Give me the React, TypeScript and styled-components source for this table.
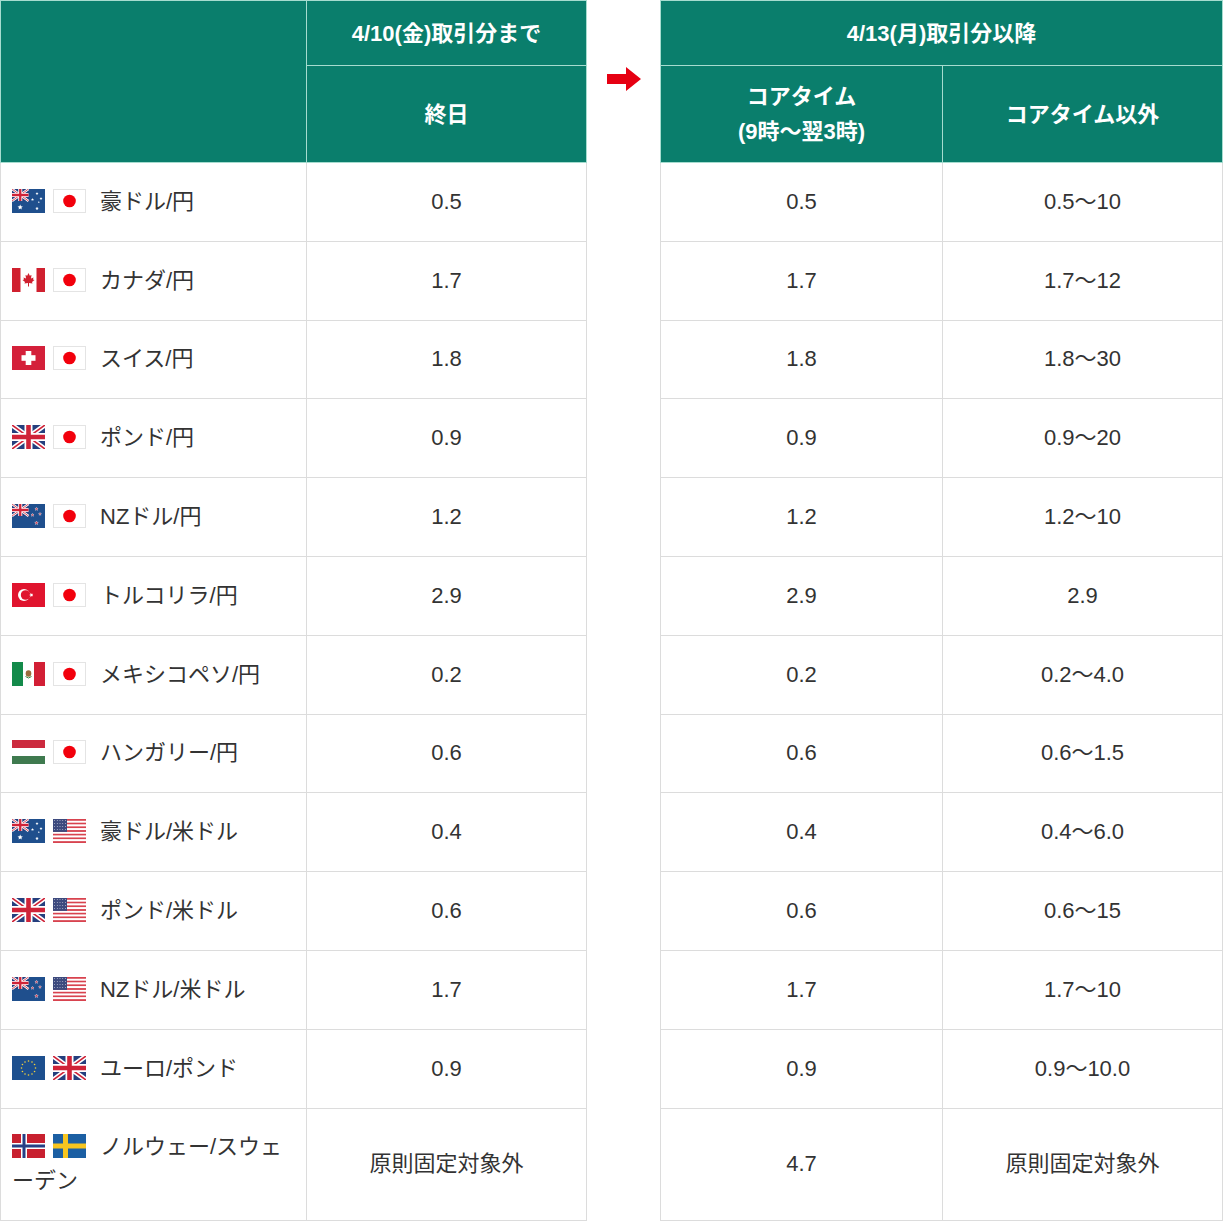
import React from 'react';
import styled, { createGlobalStyle } from 'styled-components';

const GlobalStyle = createGlobalStyle`
  body {
    margin: 0;
    background: #fff;
    font-family: "Liberation Sans", "Noto Sans CJK JP", sans-serif;
  }
`;

const Page = styled.div`
  display: flex;
  align-items: flex-start;
  width: 1223px;
`;

const Table = styled.table<{ $width: number }>`
  width: ${p => p.$width}px;
  border-collapse: collapse;
  table-layout: fixed;
`;

const HeadRow = styled.tr<{ $height: number }>`
  height: ${p => p.$height}px;
`;

const HeadCell = styled.th`
  background: #0a7e6c;
  color: #fff;
  font-size: 22px;
  font-weight: 700;
  line-height: 35px;
  text-align: center;
  border: 1px solid #a6dccf;
  padding: 0 8px;
`;

const BodyRow = styled.tr<{ $height: number }>`
  height: ${p => p.$height}px;
`;

const Cell = styled.td`
  border: 1px solid #dcdcdc;
  color: #333;
  font-size: 22px;
  line-height: 34px;
  text-align: center;
  padding: 0 12px;
`;

const PairCell = styled(Cell)`
  text-align: left;
  padding: 0 12px 0 11px;
  line-break: loose;
`;

const ArrowColumn = styled.div`
  width: 73px;
  flex: none;
  display: flex;
  justify-content: center;
  padding-top: 67px;
`;

const FlagSvg = styled.svg<{ $gap: number }>`
  width: 33px;
  height: 24px;
  vertical-align: -4px;
  margin-right: ${p => p.$gap}px;
`;

const starPoints = (cx: number, cy: number, r: number) => {
  const pts: string[] = [];
  for (let i = 0; i < 10; i++) {
    const rad = i % 2 === 0 ? r : r * 0.45;
    const a = -Math.PI / 2 + (i * Math.PI) / 5;
    pts.push(`${(cx + rad * Math.cos(a)).toFixed(2)},${(cy + rad * Math.sin(a)).toFixed(2)}`);
  }
  return pts.join(' ');
};

const Union = () => (
  <g>
    <rect width="33" height="24" fill="#253f7e" />
    <path d="M0,0L33,24M33,0L0,24" stroke="#fff" strokeWidth="4.8" />
    <path d="M0,0L33,24M33,0L0,24" stroke="#cf2338" strokeWidth="1.6" />
    <path d="M16.5,0V24M0,12H33" stroke="#fff" strokeWidth="8" />
    <path d="M16.5,0V24M0,12H33" stroke="#cf2338" strokeWidth="4.6" />
  </g>
);

const flags: Record<string, React.ReactNode> = {
  jp: (
    <g>
      <rect x="0.5" y="0.5" width="32" height="23" fill="#fff" stroke="#e4e4e4" />
      <circle cx="16.5" cy="12" r="6.3" fill="#f2000c" />
    </g>
  ),
  au: (
    <g>
      <rect width="33" height="24" fill="#1f4f8d" />
      <g transform="scale(0.5)">
        <Union />
      </g>
      <polygon points={starPoints(8.2, 18.3, 2.8)} fill="#fff" />
      <polygon points={starPoints(25, 4.5, 1.6)} fill="#fff" />
      <polygon points={starPoints(20.5, 10.5, 1.6)} fill="#fff" />
      <polygon points={starPoints(29, 9.5, 1.6)} fill="#fff" />
      <polygon points={starPoints(25, 19.5, 1.8)} fill="#fff" />
      <polygon points={starPoints(26.8, 13.2, 1)} fill="#fff" />
    </g>
  ),
  nz: (
    <g>
      <rect width="33" height="24" fill="#1f4f8d" />
      <g transform="scale(0.5)">
        <Union />
      </g>
      <polygon points={starPoints(24.5, 5, 1.7)} fill="#d8283c" stroke="#fff" strokeWidth="0.4" />
      <polygon points={starPoints(20.5, 11, 1.6)} fill="#d8283c" stroke="#fff" strokeWidth="0.4" />
      <polygon points={starPoints(28, 10, 1.5)} fill="#d8283c" stroke="#fff" strokeWidth="0.4" />
      <polygon points={starPoints(24.5, 19, 1.9)} fill="#d8283c" stroke="#fff" strokeWidth="0.4" />
    </g>
  ),
  gb: <Union />,
  ca: (
    <g>
      <rect width="33" height="24" fill="#fff" />
      <rect width="8.5" height="24" fill="#d0202f" />
      <rect x="24.5" width="8.5" height="24" fill="#d0202f" />
      <path
        d="M16.5,5 L17.8,7.8 L19.5,7 L19,10.5 L21.5,9.5 L21,11.5 L22.5,12 L20,14 L20.5,15.5 L17,15 L17,18.5 L16,18.5 L16,15 L12.5,15.5 L13,14 L10.5,12 L12,11.5 L11.5,9.5 L14,10.5 L13.5,7 L15.2,7.8 Z"
        fill="#d0202f"
      />
    </g>
  ),
  ch: (
    <g>
      <rect width="33" height="24" fill="#d4203a" />
      <rect x="13.7" y="5" width="5.6" height="14" fill="#fff" />
      <rect x="9.5" y="9.2" width="14" height="5.6" fill="#fff" />
    </g>
  ),
  tr: (
    <g>
      <rect width="33" height="24" fill="#e0142e" />
      <circle cx="12" cy="12" r="6" fill="#fff" />
      <circle cx="13.6" cy="12" r="4.8" fill="#e0142e" />
      <polygon points={starPoints(19.3, 12, 2.3)} fill="#fff" transform="rotate(-18 19.3 12)" />
    </g>
  ),
  mx: (
    <g>
      <rect width="33" height="24" fill="#fff" />
      <rect width="11" height="24" fill="#138a4a" />
      <rect x="22" width="11" height="24" fill="#d21f35" />
      <ellipse cx="16.5" cy="11.5" rx="2.8" ry="3.2" fill="#9a6b3c" />
      <path d="M13.5,14.5 Q16.5,17.5 19.5,14.5" stroke="#3f8a45" strokeWidth="1" fill="none" />
    </g>
  ),
  hu: (
    <g>
      <rect width="33" height="8" fill="#cc2a3e" />
      <rect y="8" width="33" height="8" fill="#fff" />
      <rect y="16" width="33" height="8" fill="#3f7a4f" />
    </g>
  ),
  us: (
    <g>
      {Array.from({ length: 13 }).map((_, i) => (
        <rect key={i} y={(i * 24) / 13} width="33" height={24 / 13 + 0.05} fill={i % 2 === 0 ? '#d8434f' : '#fff'} />
      ))}
      <rect width="14" height={(24 / 13) * 7} fill="#3d4a7e" />
      {Array.from({ length: 20 }).map((_, i) => (
        <circle key={i} cx={1.5 + (i % 5) * 2.75} cy={1.5 + Math.floor(i / 5) * 3} r="0.45" fill="#fff" />
      ))}
    </g>
  ),
  eu: (
    <g>
      <rect width="33" height="24" fill="#1d4f8e" />
      {Array.from({ length: 12 }).map((_, i) => {
        const a = (i * Math.PI) / 6;
        return <circle key={i} cx={16.5 + 7 * Math.cos(a)} cy={12 + 7 * Math.sin(a)} r="0.8" fill="#f3d23b" />;
      })}
    </g>
  ),
  no: (
    <g>
      <rect width="33" height="24" fill="#c8202f" />
      <rect x="9" width="6" height="24" fill="#fff" />
      <rect y="9" width="33" height="6" fill="#fff" />
      <rect x="10.5" width="3" height="24" fill="#263f85" />
      <rect y="10.5" width="33" height="3" fill="#263f85" />
    </g>
  ),
  se: (
    <g>
      <rect width="33" height="24" fill="#1b5fa3" />
      <rect x="10" width="5" height="24" fill="#f6c520" />
      <rect y="9.5" width="33" height="5" fill="#f6c520" />
    </g>
  ),
};

const Flag = ({ code, gap }: { code: string; gap: number }) => (
  <FlagSvg viewBox="0 0 33 24" $gap={gap}>
    {flags[code]}
  </FlagSvg>
);

const Arrow = () => (
  <svg width="34" height="24" viewBox="0 0 34 24">
    <polygon points="0,7 19,7 19,0 34,12 19,24 19,17 0,17" fill="#e60012" />
  </svg>
);

type Pair = {
  flags: [string, string];
  name: string;
  before: string;
  core: string;
  other: string;
};

const pairs: Pair[] = [
  { flags: ['au', 'jp'], name: '豪ドル/円', before: '0.5', core: '0.5', other: '0.5〜10' },
  { flags: ['ca', 'jp'], name: 'カナダ/円', before: '1.7', core: '1.7', other: '1.7〜12' },
  { flags: ['ch', 'jp'], name: 'スイス/円', before: '1.8', core: '1.8', other: '1.8〜30' },
  { flags: ['gb', 'jp'], name: 'ポンド/円', before: '0.9', core: '0.9', other: '0.9〜20' },
  { flags: ['nz', 'jp'], name: 'NZドル/円', before: '1.2', core: '1.2', other: '1.2〜10' },
  { flags: ['tr', 'jp'], name: 'トルコリラ/円', before: '2.9', core: '2.9', other: '2.9' },
  { flags: ['mx', 'jp'], name: 'メキシコペソ/円', before: '0.2', core: '0.2', other: '0.2〜4.0' },
  { flags: ['hu', 'jp'], name: 'ハンガリー/円', before: '0.6', core: '0.6', other: '0.6〜1.5' },
  { flags: ['au', 'us'], name: '豪ドル/米ドル', before: '0.4', core: '0.4', other: '0.4〜6.0' },
  { flags: ['gb', 'us'], name: 'ポンド/米ドル', before: '0.6', core: '0.6', other: '0.6〜15' },
  { flags: ['nz', 'us'], name: 'NZドル/米ドル', before: '1.7', core: '1.7', other: '1.7〜10' },
  { flags: ['eu', 'gb'], name: 'ユーロ/ポンド', before: '0.9', core: '0.9', other: '0.9〜10.0' },
  { flags: ['no', 'se'], name: 'ノルウェー/スウェーデン', before: '原則固定対象外', core: '4.7', other: '原則固定対象外' },
];

const rowHeight = (i: number) => (i === pairs.length - 1 ? 112 : 78.8);

export default function App() {
  return (
    <>
      <GlobalStyle />
      <Page>
        <Table $width={587}>
          <colgroup>
            <col style={{ width: 306 }} />
            <col />
          </colgroup>
          <thead>
            <HeadRow $height={65}>
              <HeadCell rowSpan={2} />
              <HeadCell>4/10(金)取引分まで</HeadCell>
            </HeadRow>
            <HeadRow $height={97}>
              <HeadCell>終日</HeadCell>
            </HeadRow>
          </thead>
          <tbody>
            {pairs.map((p, i) => (
              <BodyRow key={p.name} $height={rowHeight(i)}>
                <PairCell>
                  <Flag code={p.flags[0]} gap={8} />
                  <Flag code={p.flags[1]} gap={14} />
                  {p.name}
                </PairCell>
                <Cell>{p.before}</Cell>
              </BodyRow>
            ))}
          </tbody>
        </Table>

        <ArrowColumn>
          <Arrow />
        </ArrowColumn>

        <Table $width={563}>
          <colgroup>
            <col style={{ width: 282 }} />
            <col />
          </colgroup>
          <thead>
            <HeadRow $height={65}>
              <HeadCell colSpan={2}>4/13(月)取引分以降</HeadCell>
            </HeadRow>
            <HeadRow $height={97}>
              <HeadCell>
                コアタイム
                <br />
                (9時〜翌3時)
              </HeadCell>
              <HeadCell>コアタイム以外</HeadCell>
            </HeadRow>
          </thead>
          <tbody>
            {pairs.map((p, i) => (
              <BodyRow key={p.name} $height={rowHeight(i)}>
                <Cell>{p.core}</Cell>
                <Cell>{p.other}</Cell>
              </BodyRow>
            ))}
          </tbody>
        </Table>
      </Page>
    </>
  );
}
